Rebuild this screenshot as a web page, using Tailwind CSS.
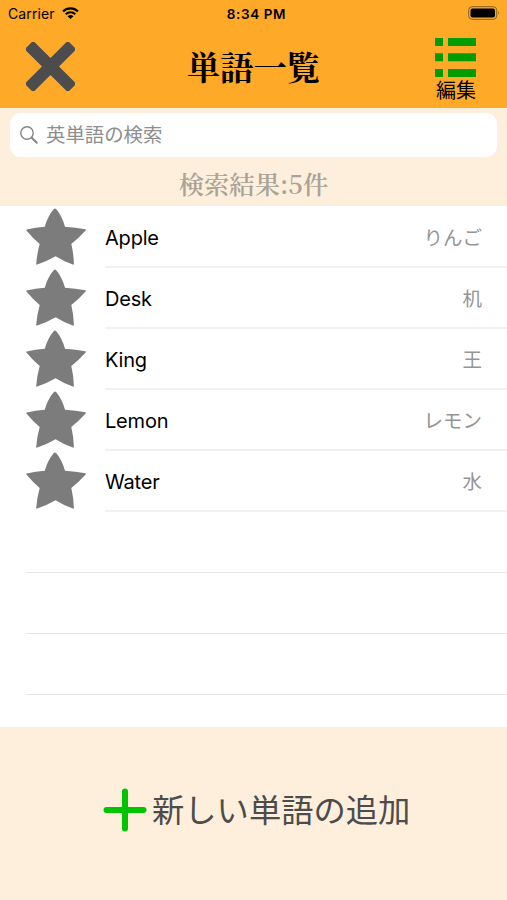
<!DOCTYPE html>
<html lang="ja">

<head>
  <meta charset="UTF-8" />
  <meta name="viewport" content="width=device-width, initial-scale=1.0" />
  <title>単語一覧</title>
  <script src="https://cdn.jsdelivr.net/npm/@tailwindcss/browser@4"></script>
</head>

<body class="h-screen flex flex-col overflow-hidden bg-[#feefdc] font-['Inter','Noto_Sans_CJK_JP',sans-serif]">
  <svg class="hidden">
    <symbol id="star" viewBox="0 0 60 58">
      <path fill="#7c7c7c" d="M27.700 2.200Q28.900 .9 30.300 2.200C34 6.500 37 12.500 39 19.700Q49.500 20.300 59.400 22.300Q60.300 22.800 59.600 23.600Q53 31 45.300 37Q47.600 46.500 47.900 57Q47.800 58 46.800 57.600Q37.500 54.300 29.600 49.300Q21 54.300 11.200 57.600Q10.200 58 10.200 57Q11 46.500 13.700 37Q6.500 31 .4 23.600Q0 22.700 .8 22.400Q9.500 20.300 18.800 19.700C20.800 12.500 23.800 6.500 27.700 2.200Z" />
    </symbol>
  </svg>

  <header class="h-[108px] shrink-0 bg-[#ffa929]">
    <!-- Status bar -->
    <div class="h-7 grid grid-cols-3 items-center pl-2 pr-[7px] text-[14px] leading-none">
      <div class="flex items-center gap-[7px]">
        <span class="tracking-[.1px]">Carrier</span>
        <svg class="w-[17px] h-3 -mt-0.5" viewBox="0 0 17 12" fill="none" stroke="#000" stroke-width="2.200">
          <path d="M1 4.400a10.800 10.800 0 0 1 15 0M3.700 7.200a6.900 6.900 0 0 1 9.600 0" />
          <path fill="#000" stroke="none" d="M5.500 9.300a4.400 4.400 0 0 1 6 0L8.500 12Z" />
        </svg>
      </div>
      <span class="pl-[5px] pt-px text-center font-semibold text-[13.500px] tracking-[.6px]">8:34 PM</span>
      <svg class="justify-self-end w-8 h-[14px] -mt-0.5" viewBox="0 0 32 14">
        <rect x=".7" y=".7" width="28" height="12.600" rx="3.500" fill="none" stroke="#87601f" stroke-width="1" />
        <rect x="2.500" y="2.500" width="24.500" height="9" rx="2" />
        <path fill="#87601f" d="M30.300 5q1.700 1.800 0 4z" />
      </svg>
    </div>

    <div class="h-20 grid grid-cols-3 pl-[30px] pr-[30px]">
      <svg class="w-[49px] h-[49px] mt-3.5 -ml-1" viewBox="0 0 49 49" fill="#4c4c4c">
        <rect x="-6" y="18.500" width="61" height="12" rx="2.800" transform="rotate(45 24.500 24.500)" />
        <rect x="-6" y="18.500" width="61" height="12" rx="2.800" transform="rotate(-45 24.500 24.500)" />
      </svg>
      <h1 class="justify-self-center mt-[17px] font-['Liberation_Serif','Noto_Serif_CJK_JP','Noto_Sans_CJK_JP',serif] font-bold text-[33.300px] leading-[48px] whitespace-nowrap">単語一覧</h1>
      <div class="justify-self-end w-[42px] mt-[10px] flex flex-col items-center">
        <svg class="w-[42px] h-[39px] shrink-0" viewBox="0 0 42 39" fill="#009c00">
          <path d="M0 0h8v8H0zM13 0h28v8H13zM0 15.300h8v8H0zM13 15.300h28v8H13zM0 31h8v8H0zM13 31h28v8H13z" />
        </svg>
        <span class="text-[20px] leading-[28px] whitespace-nowrap">編集</span>
      </div>
    </div>
  </header>

  <section class="h-[98px] shrink-0 pt-[5px]">
    <div class="ml-[10px] mr-[10px] h-11 rounded-[11px] bg-white flex items-center pl-[10px] gap-2 text-[#8e8e8e]">
      <svg class="w-[18px] h-[18px]" viewBox="0 0 18 18" fill="none" stroke="#858585">
        <circle cx="7" cy="7" r="6.200" stroke-width="1.400" />
        <path stroke-width="2" stroke-linecap="round" d="M11.700 11.700l5 5" />
      </svg>
      <span class="pt-px text-[19.400px] leading-none">英単語の検索</span>
    </div>
    <p class="mt-2 text-center font-['Noto_Serif_CJK_JP','Liberation_Serif','Noto_Sans_CJK_JP',serif] font-semibold text-[25.300px] leading-9 text-[#aaa39a]">検索結果:5件</p>
  </section>

  <ul class="h-[521px] shrink-0 bg-white text-[20px] leading-none">
    <li class="h-[61px] flex pl-[26px]">
      <svg class="w-[60px] h-[58px] mt-px mr-[19px]"><use href="#star" /></svg>
      <div class="flex-1 mt-px -mb-px pt-0.5 flex items-center justify-between border-b-2 border-[#f1f1f1] pr-[25px]">
        <span class="tracking-[-.2px]">Apple</span>
        <span class="pt-0.5 text-[19.500px] text-[#959595]">りんご</span>
      </div>
    </li>
    <li class="h-[61px] flex pl-[26px]">
      <svg class="w-[60px] h-[58px] mt-px mr-[19px]"><use href="#star" /></svg>
      <div class="flex-1 mt-px -mb-px pt-0.5 flex items-center justify-between border-b-2 border-[#f1f1f1] pr-[25px]">
        <span class="tracking-[-.2px]">Desk</span>
        <span class="pt-0.5 text-[19.500px] text-[#959595]">机</span>
      </div>
    </li>
    <li class="h-[61px] flex pl-[26px]">
      <svg class="w-[60px] h-[58px] mt-px mr-[19px]"><use href="#star" /></svg>
      <div class="flex-1 mt-px -mb-px pt-0.5 flex items-center justify-between border-b-2 border-[#f1f1f1] pr-[25px]">
        <span class="tracking-[-.2px]">King</span>
        <span class="pt-0.5 text-[19.500px] text-[#959595]">王</span>
      </div>
    </li>
    <li class="h-[61px] flex pl-[26px]">
      <svg class="w-[60px] h-[58px] mt-px mr-[19px]"><use href="#star" /></svg>
      <div class="flex-1 mt-px -mb-px pt-0.5 flex items-center justify-between border-b-2 border-[#f1f1f1] pr-[25px]">
        <span class="tracking-[-.2px]">Lemon</span>
        <span class="pt-0.5 text-[19.500px] text-[#959595]">レモン</span>
      </div>
    </li>
    <li class="h-[61px] flex pl-[26px]">
      <svg class="w-[60px] h-[58px] mt-px mr-[19px]"><use href="#star" /></svg>
      <div class="flex-1 mt-px -mb-px pt-0.5 flex items-center justify-between border-b-2 border-[#f1f1f1] pr-[25px]">
        <span class="tracking-[-.2px]">Water</span>
        <span class="pt-0.5 text-[19.500px] text-[#959595]">水</span>
      </div>
    </li>
    <!-- Empty rows -->
    <li class="h-[62px] ml-[26px] border-b border-[#e6e6e6]"></li>
    <li class="h-[61px] ml-[26px] border-b border-[#e6e6e6]"></li>
    <li class="h-[61px] ml-[26px] border-b border-[#e6e6e6]"></li>
  </ul>

  <footer class="flex-1 flex items-start pt-[61px] pl-[103px] gap-[5px] text-[#4c4c4c]">
    <svg class="w-11 h-11 shrink-0" viewBox="0 0 44 44" fill="none" stroke="#00c400" stroke-width="6" stroke-linecap="round">
      <path d="M22 3.500v37M3.500 22h37" />
    </svg>
    <span class="text-[32.300px] leading-[46px] whitespace-nowrap">新しい単語の追加</span>
  </footer>
</body>

</html>
